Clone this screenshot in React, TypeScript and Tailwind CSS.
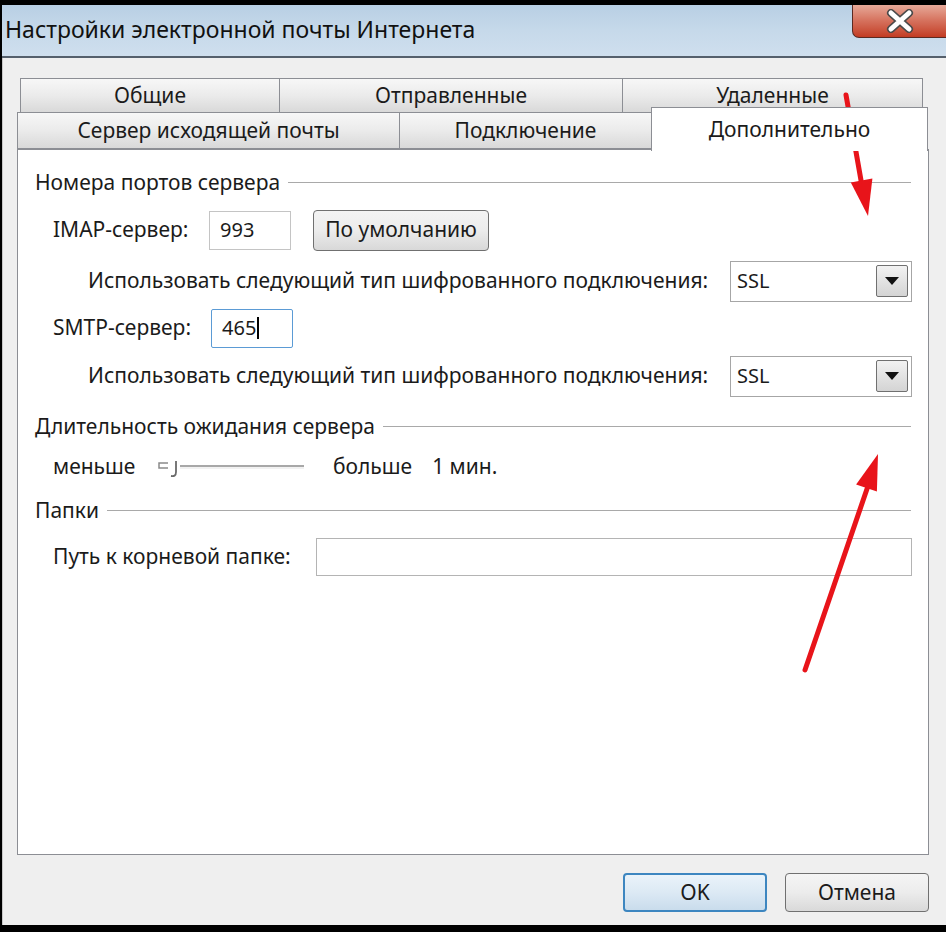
import React from "react";

const tabBase =
  "flex items-center justify-center border border-[#8c8e94] bg-gradient-to-b from-[#f7f7f7] via-[#ebebeb] to-[#d9d9d9] text-[21px] text-[#1b1b1b]";

function GroupHeader({ title }: { title: string }) {
  return (
    <div className="flex h-[30px] items-center gap-[8px] pl-[17px] pr-[17px]">
      <span className="whitespace-nowrap text-[21px]">{title}</span>
      <div className="h-[2px] flex-1 border-t border-[#a9a9a9] bg-white" />
    </div>
  );
}

function EncryptionRow() {
  return (
    <div className="flex h-[42px] items-center justify-between pl-[70px] pr-[16px]">
      <span className="whitespace-nowrap text-[21px]">
        Использовать следующий тип шифрованного подключения:
      </span>
      <div className="flex h-[41px] w-[182px] items-center justify-between border border-[#a6a6a6] bg-white pl-[6px] pr-[3px]">
        <span className="text-[20px]">SSL</span>
        <div className="flex h-[32px] w-[32px] items-center justify-center rounded-[2px] border border-[#707070] bg-gradient-to-b from-[#f2f2f2] to-[#d4d4d4]">
          <svg width="14" height="8" viewBox="0 0 14 8">
            <path d="M0 0 L14 0 L7 8 Z" fill="#111" />
          </svg>
        </div>
      </div>
    </div>
  );
}

export default function App() {
  return (
    <div className="relative h-[932px] w-[946px] overflow-hidden bg-black pt-[5px] pb-[7px] pl-[2px] font-['Noto_Sans','DejaVu_Sans',sans-serif] text-[#1b1b1b]">
      <div className="flex h-full flex-col">
        {/* title bar */}
        <div className="flex h-[53px] items-start justify-between border-b-2 border-[#55606c] bg-gradient-to-b from-[#b8cfe4] via-[#c6d9ea] to-[#cfdfee]">
          <span className="pl-[3px] pt-[9px] text-[23px] leading-[30px] text-[#111]">
            Настройки электронной почты Интернета
          </span>
          <div className="flex h-[33px] w-[94px] items-center justify-center rounded-bl-[7px] border-b border-l border-[#5b2a22] bg-gradient-to-b from-[#e6a999] via-[#d5705c] to-[#c23b22]">
            <svg width="30" height="24" viewBox="0 0 30 24">
              <path d="M6 4 L24 20 M24 4 L6 20" stroke="#4a4a4a" strokeWidth="8" strokeLinecap="round" />
              <path d="M6 4 L24 20 M24 4 L6 20" stroke="#ffffff" strokeWidth="5" strokeLinecap="round" />
            </svg>
          </div>
        </div>

        {/* body */}
        <div className="flex flex-1 flex-col border-l border-[#c8c8c8] bg-[#efefef]">
          {/* tabs */}
          <div className="mt-[20px] flex h-[35px] pl-[17px]">
            <div className={`${tabBase} w-[260px]`}>Общие</div>
            <div className={`${tabBase} -ml-px w-[344px]`}>Отправленные</div>
            <div className={`${tabBase} -ml-px w-[301px]`}>Удаленные</div>
          </div>
          <div className="-mt-px flex h-[37px] items-end pl-[14px]">
            <div className={`${tabBase} h-[37px] w-[383px]`}>Сервер исходящей почты</div>
            <div className={`${tabBase} -ml-px h-[37px] w-[253px]`}>Подключение</div>
            <div className="relative z-10 -mb-[2px] -ml-px flex h-[44px] w-[277px] items-start justify-center border border-b-0 border-[#8c8e94] bg-white pt-[6px] text-[21px]">
              Дополнительно
            </div>
          </div>

          {/* panel */}
          <div className="ml-[14px] flex h-[706px] w-[912px] flex-col border border-[#8c8e94] bg-white pt-[18px]">
            <GroupHeader title="Номера портов сервера" />

            <div className="mt-[11px] flex h-[42px] items-center pl-[35px]">
              <span className="w-[156px] text-[21px]">IMAP-сервер:</span>
              <div className="flex h-[39px] w-[82px] items-center border border-[#c4c4c4] bg-white pl-[10px] text-[20px]">
                993
              </div>
              <div className="ml-[22px] flex h-[41px] w-[176px] items-center justify-center rounded-[4px] border border-[#707070] bg-gradient-to-b from-[#f3f3f3] via-[#ececec] to-[#d8d8d8] text-[21px]">
                По умолчанию
              </div>
            </div>

            <div className="mt-[9px]">
              <EncryptionRow />
            </div>

            <div className="mt-[6px] flex h-[40px] items-center pl-[35px]">
              <span className="w-[158px] text-[21px]">SMTP-сервер:</span>
              <div className="flex h-[39px] w-[82px] items-center rounded-[2px] border border-[#5b9bd5] bg-white pl-[10px] text-[20px]">
                465<span className="ml-px inline-block h-[22px] w-[2px] bg-black" />
              </div>
            </div>

            <div className="mt-[7px]">
              <EncryptionRow />
            </div>

            <div className="mt-[15px]">
              <GroupHeader title="Длительность ожидания сервера" />
            </div>

            <div className="mt-[10px] flex h-[30px] items-center pl-[35px] text-[21px]">
              <span className="w-[105px]">меньше</span>
              <svg width="148" height="30" viewBox="0 0 148 30">
                <path d="M22 14 L146 14" stroke="#a8a8a8" strokeWidth="2" />
                <path d="M22 16 L146 16" stroke="#e4e4e4" strokeWidth="1" />
                <path d="M10 11 L1 11 L1 16 L10 16" stroke="#8a8a8a" strokeWidth="1.5" fill="none" />
                <path d="M18 9 L18 20 Q18 25 13 24" stroke="#6a6a6a" strokeWidth="1.8" fill="none" />
              </svg>
              <span className="ml-[27px]">больше</span>
              <span className="ml-[20px]">1 мин.</span>
            </div>

            <div className="mt-[14px]">
              <GroupHeader title="Папки" />
            </div>

            <div className="mt-[11px] flex h-[40px] items-center pl-[35px] pr-[16px]">
              <span className="w-[263px] text-[21px]">Путь к корневой папке:</span>
              <div className="h-[38px] flex-1 border border-[#b4b4b4] bg-white" />
            </div>
          </div>

          {/* buttons */}
          <div className="mt-[18px] flex justify-end gap-[18px] pr-[17px]">
            <div className="flex h-[39px] w-[144px] items-center justify-center rounded-[4px] border-2 border-[#3d86c0] bg-gradient-to-b from-[#eaf3fa] via-[#dce9f4] to-[#c9dcec] text-[21px]">
              OK
            </div>
            <div className="flex h-[39px] w-[144px] items-center justify-center rounded-[4px] border border-[#707070] bg-gradient-to-b from-[#f5f5f5] via-[#ececec] to-[#d9d9d9] text-[21px]">
              Отмена
            </div>
          </div>
        </div>
      </div>

      {/* annotation arrows */}
      <svg className="pointer-events-none absolute inset-0" width="946" height="932" viewBox="0 0 946 932">
        <line x1="846" y1="95" x2="862" y2="186" stroke="#e8141a" strokeWidth="5" strokeLinecap="round" />
        <polygon points="850.8,182.6 872.4,178.6 868,216" fill="#e8141a" />
        <line x1="805" y1="670" x2="868" y2="486" stroke="#e8141a" strokeWidth="5" strokeLinecap="round" />
        <polygon points="856.1,484.5 876.9,491.5 878,454" fill="#e8141a" />
      </svg>
    </div>
  );
}
